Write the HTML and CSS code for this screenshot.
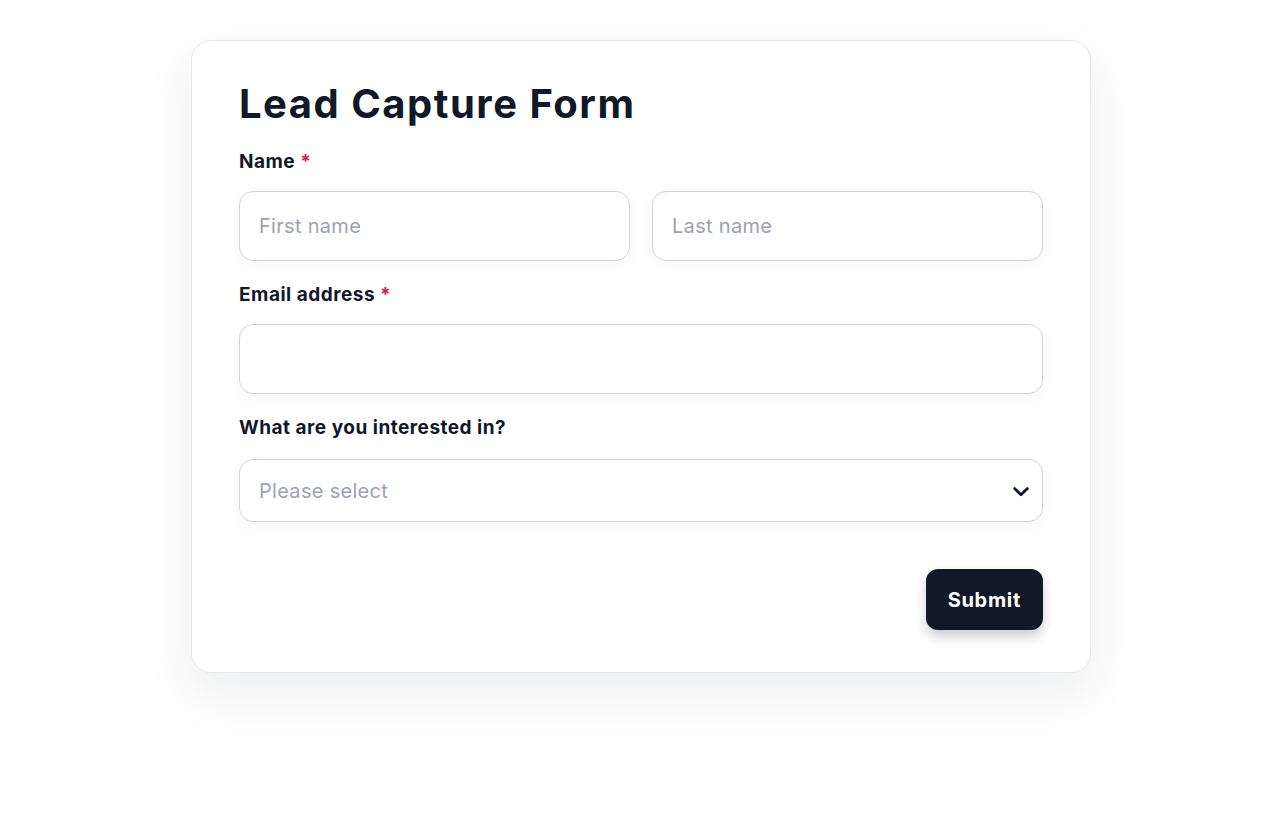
FILE: index.html
```html
<!DOCTYPE html>
<html lang="en">
<head>
    <meta charset="utf-8">
    <title>Lead Capture Form</title>
    <link rel="stylesheet" href="styles.css">
</head>
<body>
    <div class="page">
        <form class="card">
            <h1>Lead Capture Form</h1>

            <div class="field">
                <label class="label">Name <span class="req">*</span></label>
                <div class="row">
                    <input class="textbox" type="text" placeholder="First name">
                    <input class="textbox" type="text" placeholder="Last name">
                </div>
            </div>

            <div class="field">
                <label class="label" for="email">Email address <span class="req">*</span></label>
                <input class="textbox" id="email" type="email">
            </div>

            <div class="field">
                <label class="label" for="interest">What are you interested in?</label>
                <div class="select-wrap">
                    <select class="textbox select" id="interest">
                        <option>Please select</option>
                    </select>
                    <svg class="chevron" width="16" height="10" viewBox="0 0 16 10">
                        <path d="M1.6 1.6l6.4 6.2 6.4-6.2" fill="none" stroke="#111827" stroke-width="2.8" stroke-linecap="round" stroke-linejoin="round"/>
                    </svg>
                </div>
            </div>

            <div class="actions">
                <button type="button" class="submit">Submit</button>
            </div>
        </form>
    </div>
</body>
</html>
```

FILE: styles.css
```css
* {
    box-sizing: border-box;
}
body {
    margin: 0;
    background-color: #ffffff;
    color: #111827;
    font-family: Inter, "Noto Sans", sans-serif;
}
.page {
    display: flex;
    justify-content: center;
    min-height: 100vh;
    padding: 40px 0 100px 2px;
}
.card {
    width: 900px;
    align-self: flex-start;
    padding: 37px 47px 42px;
    background-color: #ffffff;
    border: 1px solid #e5e7eb;
    border-radius: 20px;
    box-shadow: 0 20px 50px rgba(17, 24, 39, 0.08);
}
h1 {
    margin: 0 0 19px;
    font-size: 40px;
    line-height: 52px;
    font-weight: 700;
    letter-spacing: 1.5px;
}
.field {
    margin-bottom: 21px;
}
.label {
    display: block;
    margin-bottom: 16px;
    font-size: 19px;
    line-height: 26px;
    font-weight: 700;
    letter-spacing: 0.5px;
}
.req {
    color: #e11d48;
}
.row {
    display: flex;
    gap: 22px;
}
.textbox {
    width: 100%;
    height: 70px;
    padding: 0 19px;
    border: 1.5px solid #d4d4d8;
    border-radius: 14px;
    background-color: #ffffff;
    color: #111827;
    font-family: inherit;
    font-size: 20px;
    letter-spacing: 0.3px;
    outline: none;
    box-shadow: 0 4px 20px rgba(17, 24, 39, 0.03);
}
.textbox::placeholder {
    color: #9ca3af;
}
.select-wrap {
    position: relative;
    margin-top: 18px;
}
.select {
    height: 63px;
    color: #9ca3af;
    appearance: none;
}
.chevron {
    position: absolute;
    right: 14px;
    top: 28px;
}
.actions {
    display: flex;
    justify-content: flex-end;
    padding-top: 26px;
}
.submit {
    height: 61px;
    padding: 0 22px;
    border: none;
    border-radius: 12px;
    background-color: #111827;
    color: #ffffff;
    font-family: inherit;
    font-size: 20px;
    font-weight: 700;
    letter-spacing: 0.7px;
    cursor: pointer;
    box-shadow: 0 6px 12px rgba(17, 24, 39, 0.22);
}
```
